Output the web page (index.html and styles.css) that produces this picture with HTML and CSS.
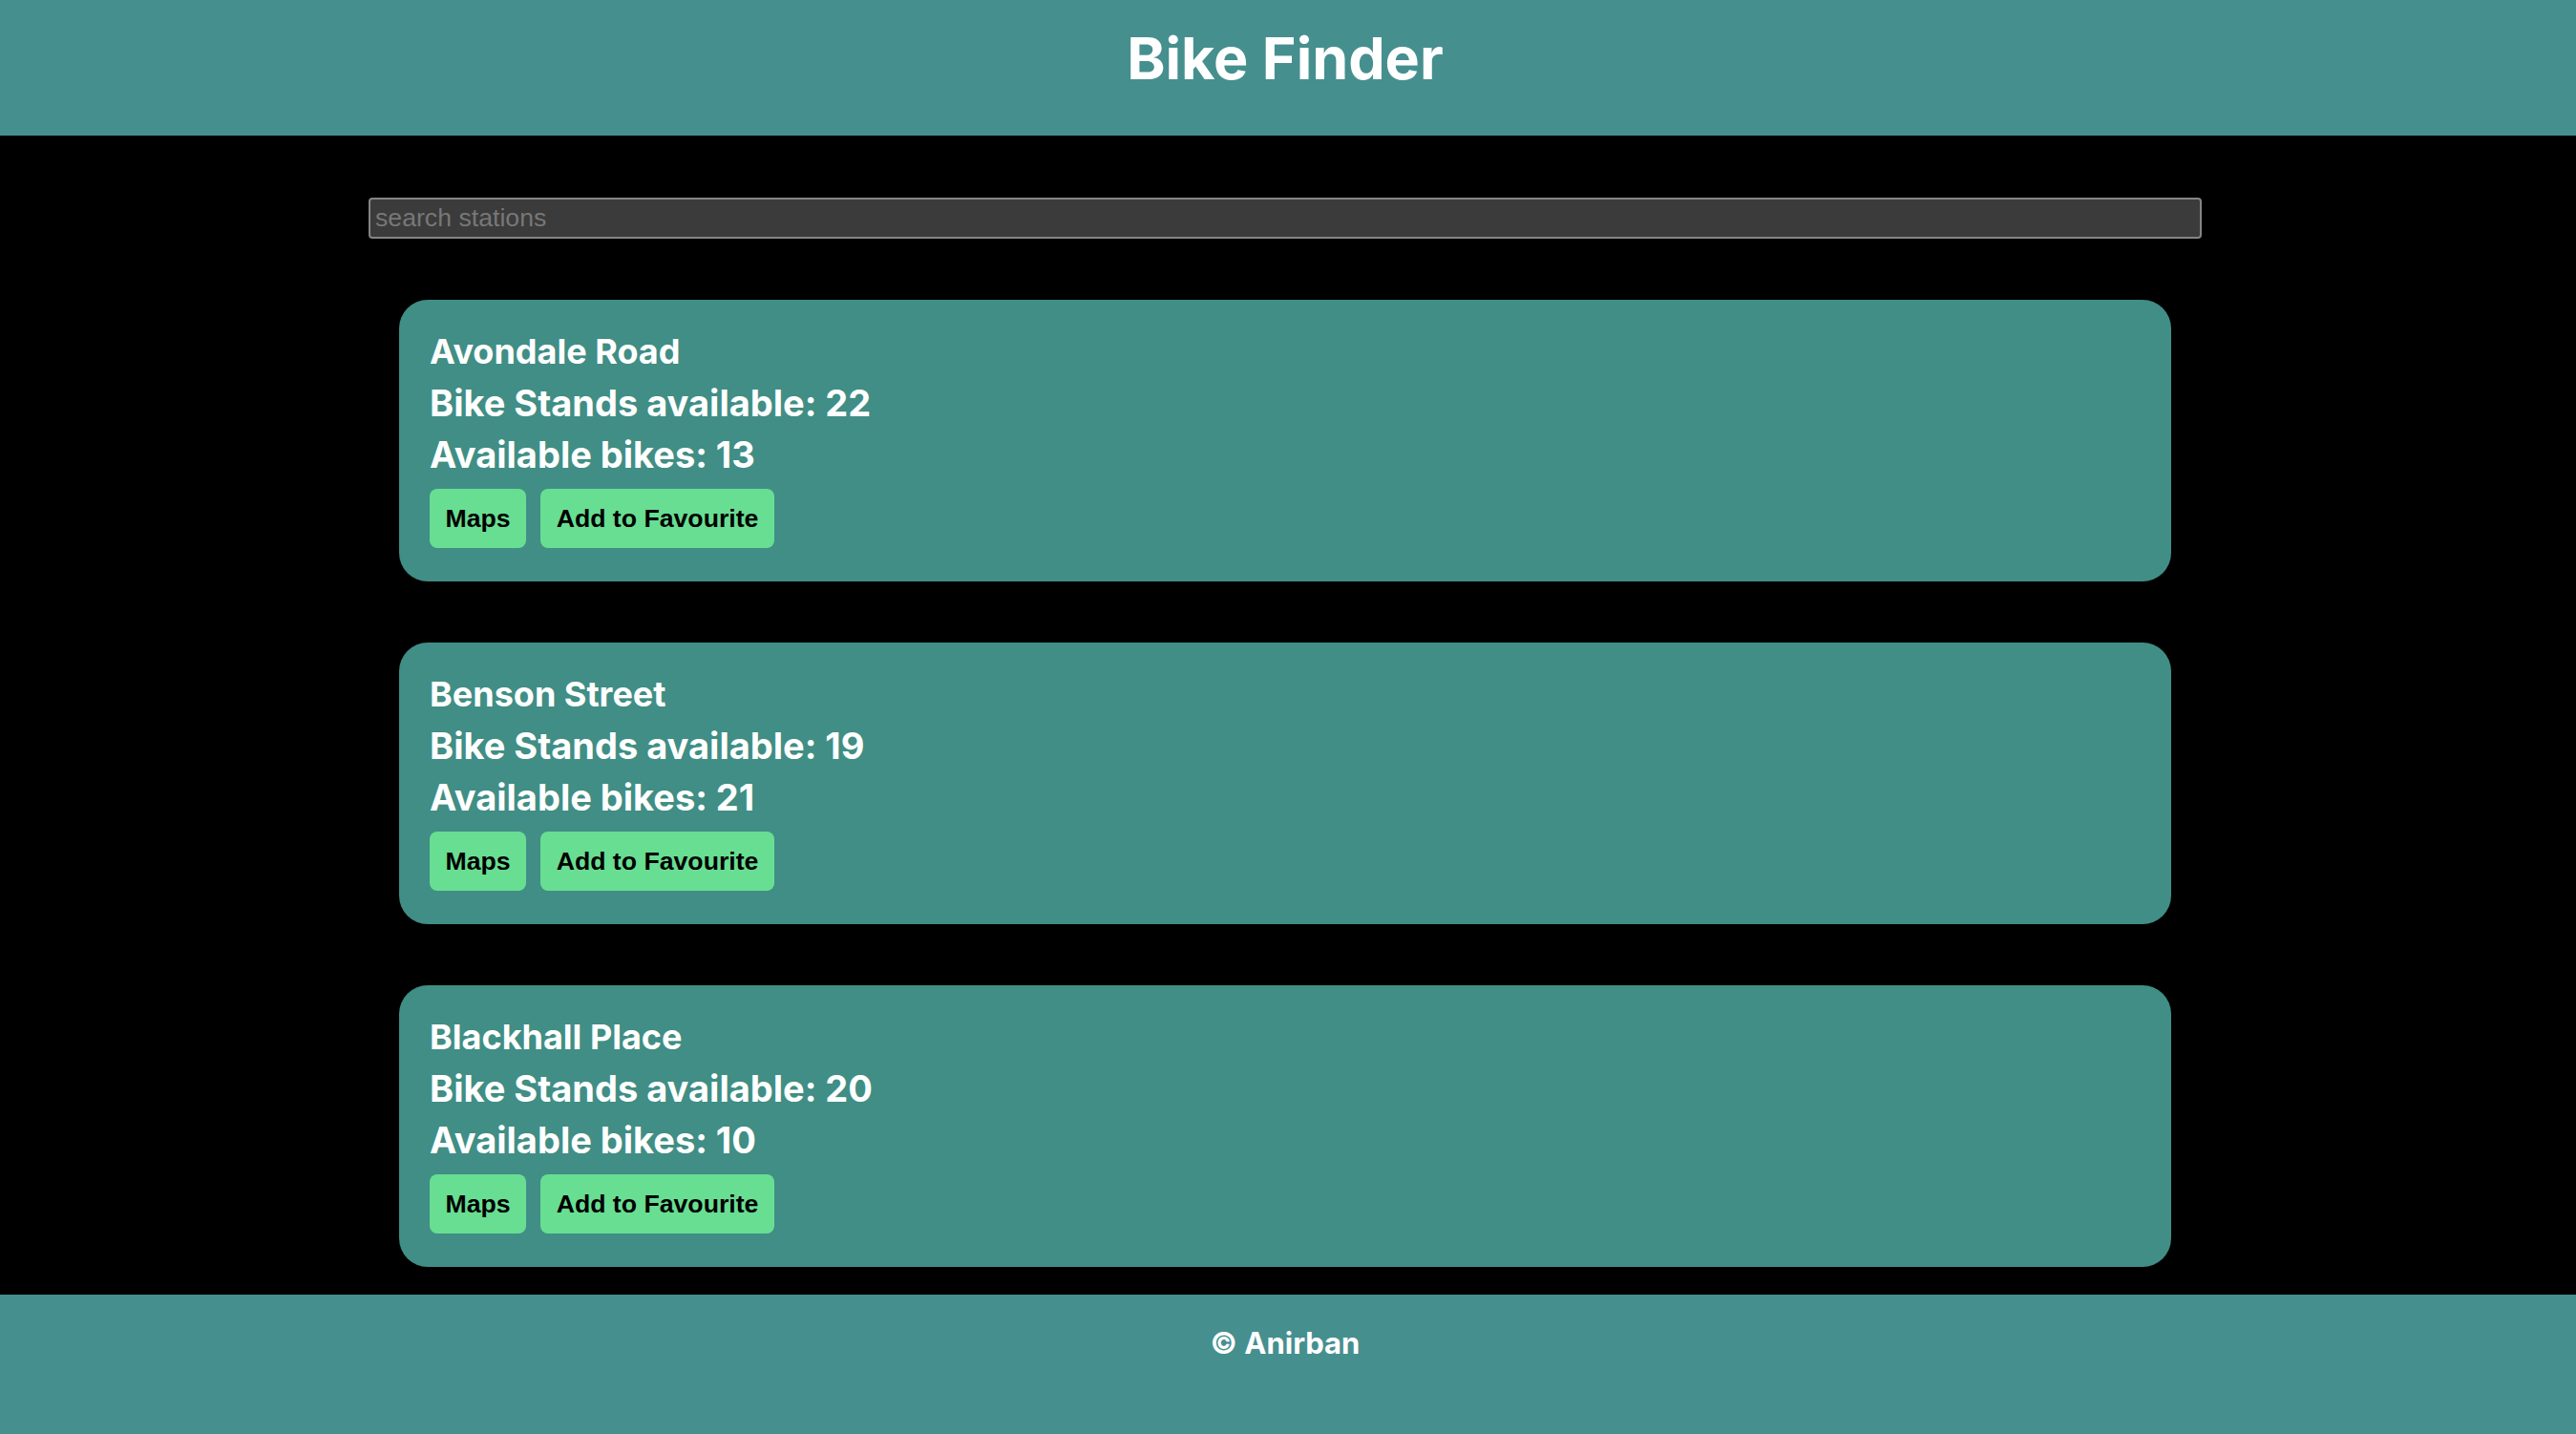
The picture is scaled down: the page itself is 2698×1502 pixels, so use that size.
FILE: index.html
```html
<!DOCTYPE html>
<html lang="en">
<head>
<meta charset="utf-8">
<title>Bike Finder</title>
<link rel="stylesheet" href="styles.css">
</head>
<body>
<div class="page">
  <header class="site-header">
    <h1 class="title">Bike Finder</h1>
  </header>
  <main class="main">
    <div class="content">
      <input class="search" type="text" placeholder="search stations">
      <div class="list">
        <section class="card">
          <div class="name">Avondale Road</div>
          <div class="stat">Bike Stands available: 22</div>
          <div class="stat">Available bikes: 13</div>
          <div class="actions">
            <button class="btn">Maps</button>
            <button class="btn">Add to Favourite</button>
          </div>
        </section>
        <section class="card">
          <div class="name">Benson Street</div>
          <div class="stat">Bike Stands available: 19</div>
          <div class="stat">Available bikes: 21</div>
          <div class="actions">
            <button class="btn">Maps</button>
            <button class="btn">Add to Favourite</button>
          </div>
        </section>
        <section class="card">
          <div class="name">Blackhall Place</div>
          <div class="stat">Bike Stands available: 20</div>
          <div class="stat">Available bikes: 10</div>
          <div class="actions">
            <button class="btn">Maps</button>
            <button class="btn">Add to Favourite</button>
          </div>
        </section>
      </div>
    </div>
  </main>
  <footer class="site-footer">
    <div class="copy">© Anirban</div>
  </footer>
</div>
</body>
</html>
```
FILE: styles.css
```css
* { box-sizing: border-box; }

html, body {
  margin: 0;
  padding: 0;
  height: 100%;
  background: #000;
}

body {
  font-family: Inter, "Noto Sans", "Liberation Sans", sans-serif;
  color: #fff;
}

.page {
  height: 100vh;
  display: flex;
  flex-direction: column;
  overflow: hidden;
}

.site-header {
  flex: 0 0 142px;
  background: #468f8f;
  padding: 24px 6px 0 0;
  text-align: center;
}

.title {
  margin: 0;
  font-size: 61px;
  line-height: 75px;
  font-weight: 700;
  color: #fff;
}

.main {
  flex: 1 1 auto;
  overflow: hidden;
  padding: 65px 6px 0 0;
}

.content {
  width: 1920px;
  margin: 0 auto;
  display: flex;
  flex-direction: column;
}

.search {
  display: block;
  width: 100%;
  height: 43px;
  margin: 0;
  padding: 0 5px;
  background: #3b3b3b;
  border: 2px solid #858585;
  border-radius: 4px;
  font-family: "Liberation Sans", Arial, sans-serif;
  font-size: 26.67px;
  color: #ddd;
  outline: none;
}

.search::placeholder {
  color: #777;
}

.list {
  display: flex;
  flex-direction: column;
  gap: 64px;
  padding: 64px 32px 0;
}

.card {
  background: #408e85;
  border-radius: 30px;
  padding: 27px 32px 35px;
  display: flex;
  flex-direction: column;
}

.name {
  font-size: 36px;
  line-height: 54px;
  font-weight: 700;
}

.stat {
  font-size: 38px;
  line-height: 54px;
  font-weight: 700;
}

.actions {
  display: flex;
  gap: 15px;
  margin-top: 9px;
}

.btn {
  height: 62px;
  padding: 0 16.5px;
  border: none;
  border-radius: 8px;
  background: #68de92;
  color: #000;
  font-family: "Liberation Sans", Arial, sans-serif;
  font-weight: 700;
  font-size: 26.67px;
  cursor: pointer;
}

.site-footer {
  flex: 0 0 146px;
  background: #468f8f;
  padding: 31px 6px 0 0;
  text-align: center;
}

.copy {
  font-size: 31px;
  line-height: 40px;
  font-weight: 700;
}
```
